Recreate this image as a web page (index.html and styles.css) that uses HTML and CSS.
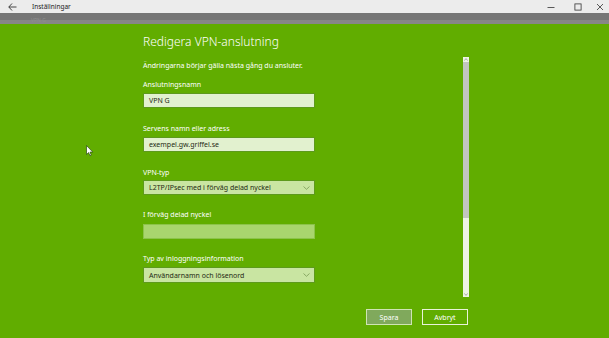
FILE: index.html
```html
<!DOCTYPE html>
<html lang="sv">
<head>
<meta charset="utf-8">
<title>Inställningar</title>
<link rel="stylesheet" href="styles.css">
</head>
<body>
<div class="window">
  <div class="titlebar">
    <svg class="back" width="9" height="8" viewBox="0 0 9 8"><path d="M4 0.5 L0.8 4 L4 7.5 M0.8 4 H8.5" fill="none" stroke="#333" stroke-width="0.9"/></svg>
    <span class="apptitle">Inställningar</span>
    <span class="spacer"></span>
    <span class="ctl"><svg width="8" height="8" viewBox="0 0 8 8"><path d="M0.5 4.5 H7.5" stroke="#333" stroke-width="0.8"/></svg></span>
    <span class="ctl"><svg width="8" height="8" viewBox="0 0 8 8"><rect x="0.9" y="0.9" width="6.2" height="6.2" fill="none" stroke="#333" stroke-width="0.8"/></svg></span>
    <span class="ctl last"><svg width="8" height="8" viewBox="0 0 8 8"><path d="M1 1 L7 7 M7 1 L1 7" stroke="#333" stroke-width="0.8"/></svg></span>
  </div>
  <div class="band"><span class="bandtext">VPN G</span></div>
  <div class="main">
    <div class="row">
      <div class="form">
        <h1 class="title">Redigera VPN-anslutning</h1>
        <p class="sub">Ändringarna börjar gälla nästa gång du ansluter.</p>
        <div class="label l1">Anslutningsnamn</div>
        <div class="field text f1">VPN G</div>
        <div class="label l2">Servens namn eller adress</div>
        <div class="field text f2">exempel.gw.griffel.se</div>
        <div class="label l3">VPN-typ</div>
        <div class="field select f3"><span>L2TP/IPsec med i förväg delad nyckel</span><svg width="7" height="4" viewBox="0 0 7 4"><path d="M0.5 0.5 L3.5 3.3 L6.5 0.5" fill="none" stroke="#6f8f4a" stroke-width="0.7"/></svg></div>
        <div class="label l4">I förväg delad nyckel</div>
        <div class="field empty f4"></div>
        <div class="label l5">Typ av inloggningsinformation</div>
        <div class="field select f5"><span>Användarnamn och lösenord</span><svg width="7" height="4" viewBox="0 0 7 4"><path d="M0.5 0.5 L3.5 3.3 L6.5 0.5" fill="none" stroke="#6f8f4a" stroke-width="0.7"/></svg></div>
      </div>
      <div class="scrollbar">
        <div class="arrow"><svg width="4" height="3" viewBox="0 0 4 3"><path d="M0.3 2.6 L2 0.6 L3.7 2.6" fill="none" stroke="#777" stroke-width="0.6"/></svg></div>
        <div class="thumb"></div>
        <div class="track"></div>
        <div class="arrow"><svg width="4" height="3" viewBox="0 0 4 3"><path d="M0.3 0.4 L2 2.4 L3.7 0.4" fill="none" stroke="#777" stroke-width="0.6"/></svg></div>
      </div>
    </div>
    <div class="buttons">
      <div class="btn primary">Spara</div>
      <div class="btn">Avbryt</div>
    </div>
    <svg class="cursor" width="8" height="12" viewBox="0 0 8 12"><path d="M0.5 0.5 L0.5 9.5 L2.6 7.6 L4 10.8 L5.3 10.2 L4 7.1 L6.8 7.1 Z" fill="#fff" stroke="#2a4a10" stroke-width="0.7"/></svg>
  </div>
</div>
</body>
</html>
```
FILE: styles.css
```css
html, body {
  margin: 0;
  padding: 0;
}
body {
  width: 609px;
  height: 338px;
  overflow: hidden;
  font-family: "Noto Sans", "Open Sans", sans-serif;
  background: #61ad00;
}
.window {
  display: flex;
  flex-direction: column;
  height: 338px;
}
.titlebar {
  height: 13px;
  background: #ececec;
  display: flex;
  align-items: center;
  font-size: 6.5px;
  color: #222;
}
.back {
  margin-left: 8px;
}
.apptitle {
  margin-left: 15px;
}
.spacer {
  flex: 1;
}
.ctl {
  width: 27px;
  display: flex;
  justify-content: center;
  align-items: center;
  height: 13px;
}
.ctl.last {
  width: 18px;
}
.band {
  height: 11px;
  background: linear-gradient(#767676 0, #767676 7px, #878787 7px, #878787 11px);
  overflow: hidden;
  font-size: 5px;
  line-height: 6px;
  color: #8e8e8e;
  position: relative;
}
.bandtext {
  position: absolute;
  left: 31px;
  top: 4px;
}
.main {
  flex: 1;
  display: flex;
  flex-direction: column;
  position: relative;
}
.row {
  display: flex;
  height: 276px;
  padding-left: 143px;
}
.form {
  width: 172px;
  display: flex;
  flex-direction: column;
  color: #fff;
}
.title {
  margin: 9px 0 0 0;
  font-size: 12px;
  line-height: 18px;
  font-weight: 300;
}
.sub {
  margin: 10px 0 0 0;
  font-size: 7px;
  line-height: 10px;
}
.label {
  font-size: 7px;
  line-height: 10px;
}
.l1 { margin-top: 9px; }
.l2 { margin-top: 16px; }
.l3 { margin-top: 16px; }
.l4 { margin-top: 15px; }
.l5 { margin-top: 15px; }
.field {
  box-sizing: border-box;
  height: 15px;
  border: 1px solid #5d9a1c;
  font-size: 7px;
  color: #1f2a14;
  display: flex;
  align-items: center;
  padding-left: 5px;
}
.f1 { margin-top: 3px; }
.f2 { margin-top: 3px; }
.f3 { margin-top: 2px; }
.f4 { margin-top: 4px; }
.f5 { margin-top: 3px; height: 16px; }
.text {
  background: #e2f1cf;
}
.select {
  background: #c9e5a2;
  justify-content: space-between;
  padding-right: 4px;
}
.empty {
  background: #a9d56e;
  border-color: #8cc34a;
}
.scrollbar {
  margin-left: 148px;
  margin-top: 33px;
  width: 6px;
  height: 240px;
  display: flex;
  flex-direction: column;
  background: #eef4e6;
}
.arrow {
  height: 5px;
  display: flex;
  align-items: center;
  justify-content: center;
  background: #eef4e6;
}
.thumb {
  height: 156px;
  background: #c2c6bf;
}
.track {
  flex: 1;
  background: #eef4e6;
}
.buttons {
  display: flex;
  justify-content: flex-end;
  gap: 10px;
  padding-right: 141px;
  margin-top: 9px;
}
.btn {
  box-sizing: border-box;
  width: 46px;
  height: 16px;
  border: 1px solid #e8f3da;
  color: #fff;
  font-size: 7px;
  display: flex;
  align-items: center;
  justify-content: center;
}
.btn.primary {
  background: #80a95c;
  border-color: #cfe4b4;
}
.cursor {
  position: absolute;
  left: 86px;
  top: 121px;
}
```
